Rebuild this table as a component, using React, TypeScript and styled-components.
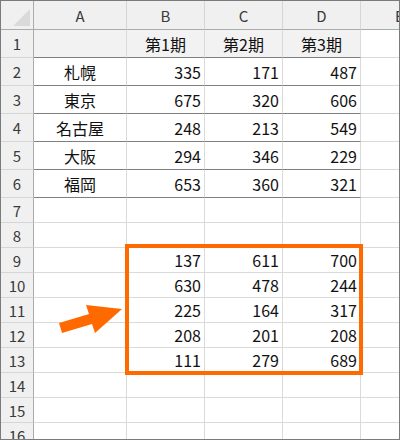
import React from "react";
import styled, { createGlobalStyle, css } from "styled-components";

const Global = createGlobalStyle`
  html, body { margin: 0; padding: 0; background: #ffffff; }
  body { font-family: "Noto Sans CJK JP", "Noto Sans", sans-serif; }
`;

const Sheet = styled.div`
  position: relative;
  width: 400px;
  height: 440px;
  box-sizing: border-box;
  border: 1px solid #7b7b7b;
  overflow: hidden;
  display: grid;
  grid-template-columns: 33px 93px 78px 78px 78px 78px;
  grid-template-rows: 29px repeat(6, 28px) repeat(10, 25px);
  background: #ffffff;
`;

const BaseCell = css`
  box-sizing: border-box;
  display: flex;
  align-items: center;
  white-space: nowrap;
  overflow: hidden;
`;

const Corner = styled.div`
  ${BaseCell};
  align-items: flex-end;
  justify-content: flex-end;
  padding: 0 3px 3px 0;
  background: #f0f0f0;
  border-right: 1px solid #ababab;
  border-bottom: 1px solid #ababab;
`;

const CornerMark = styled.span`
  width: 17px;
  height: 17px;
  background: #dadada;
  clip-path: polygon(100% 0, 100% 100%, 0 100%);
`;

const ColHead = styled.div`
  ${BaseCell};
  justify-content: center;
  background: #f0f0f0;
  color: #3a3a3a;
  font-size: 15px;
  border-right: 1px solid #d6d6d6;
  border-bottom: 1px solid #ababab;
`;

const RowHead = styled.div`
  ${BaseCell};
  justify-content: center;
  background: #f0f0f0;
  color: #3a3a3a;
  font-size: 15px;
  border-right: 1px solid #ababab;
  border-bottom: 1px solid #d6d6d6;
`;

const Cell = styled.div<{ $align: "left" | "center" | "right"; $shaded?: boolean; $ruled?: boolean }>`
  ${BaseCell};
  justify-content: ${(p) => (p.$align === "right" ? "flex-end" : p.$align === "center" ? "center" : "flex-start")};
  padding: 0 3px;
  font-size: 16px;
  color: #111111;
  background: ${(p) => (p.$shaded ? "#f2f2f2" : "#ffffff")};
  border-right: 1px solid #dadada;
  border-bottom: 1px solid ${(p) => (p.$ruled ? "#7f7f7f" : "#dadada")};
`;

const Highlight = styled.div`
  position: absolute;
  left: 124px;
  top: 243px;
  width: 238px;
  height: 131px;
  box-sizing: border-box;
  border: 4px solid #ff6a00;
  pointer-events: none;
`;

const Arrow = styled.svg`
  position: absolute;
  left: 54px;
  top: 299px;
  width: 72px;
  height: 38px;
`;

const cols = ["A", "B", "C", "D", "E"];

type Row = { cells: string[]; table?: boolean; head?: boolean };

const rows: Row[] = [
  { cells: ["", "第1期", "第2期", "第3期", ""], table: true, head: true },
  { cells: ["札幌", "335", "171", "487", ""], table: true },
  { cells: ["東京", "675", "320", "606", ""], table: true },
  { cells: ["名古屋", "248", "213", "549", ""], table: true },
  { cells: ["大阪", "294", "346", "229", ""], table: true },
  { cells: ["福岡", "653", "360", "321", ""], table: true },
  { cells: ["", "", "", "", ""] },
  { cells: ["", "", "", "", ""] },
  { cells: ["", "137", "611", "700", ""] },
  { cells: ["", "630", "478", "244", ""] },
  { cells: ["", "225", "164", "317", ""] },
  { cells: ["", "208", "201", "208", ""] },
  { cells: ["", "111", "279", "689", ""] },
  { cells: ["", "", "", "", ""] },
  { cells: ["", "", "", "", ""] },
  { cells: ["", "", "", "", ""] },
];

export default function App() {
  return (
    <>
      <Global />
      <Sheet>
        <Corner>
          <CornerMark />
        </Corner>
        {cols.map((c) => (
          <ColHead key={c}>{c}</ColHead>
        ))}
        {rows.map((r, ri) => (
          <React.Fragment key={ri}>
            <RowHead>{ri + 1}</RowHead>
            {r.cells.map((v, ci) => {
              const inTable = !!r.table && ci < 4;
              const align = ci === 0 || r.head ? "center" : "right";
              return (
                <Cell
                  key={ci}
                  $align={align}
                  $shaded={!!r.head && ci < 4}
                  $ruled={inTable}
                >
                  {v}
                </Cell>
              );
            })}
          </React.Fragment>
        ))}
        <Highlight />
        <Arrow viewBox="55 300 72 38">
          <polygon
            points="59,323 89,314 86,305 122,309 95,333 92,324 62,333"
            fill="#ff6a00"
          />
        </Arrow>
      </Sheet>
    </>
  );
}
